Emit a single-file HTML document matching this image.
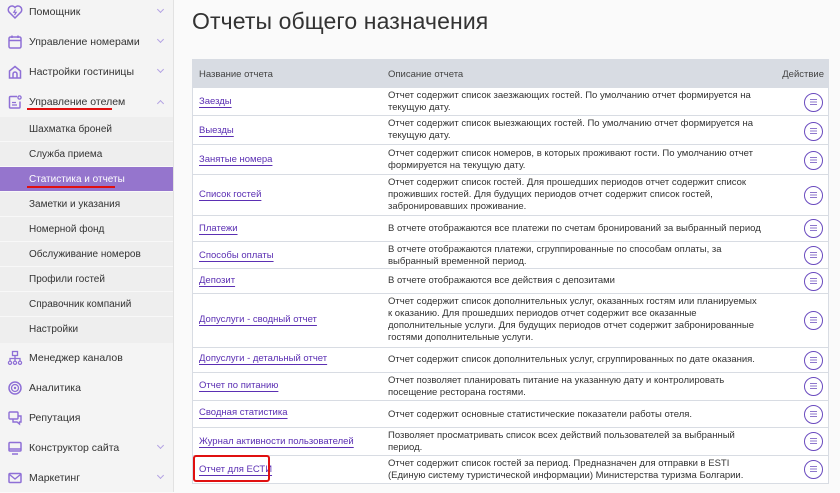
<!DOCTYPE html>
<html><head><meta charset="utf-8"><style>
*{margin:0;padding:0;box-sizing:border-box}
body{width:840px;height:492px;overflow:hidden;background:#fafafa;font-family:"Liberation Sans","DejaVu Sans",sans-serif;position:relative;color:#333}
.sb{position:absolute;left:0;top:0;width:174px;height:492px;background:#f4f4f4;border-right:1px solid #e2e2e2}
.it{position:absolute;left:0;width:173px;height:30px;font-size:10.5px;color:#333;line-height:30px;padding-left:29px}
.it svg{position:absolute;left:7px;top:7px}
.chev{position:absolute;left:158px;top:10px;width:5px;height:5px;border-right:1.2px solid #b3a2e3;border-bottom:1.2px solid #b3a2e3;transform:rotate(45deg)}
.chev.up{transform:rotate(-135deg);top:14px}
.sub{position:absolute;left:0;width:173px;height:25px;background:#eee;border-bottom:1px solid #f8f8f8;font-size:10px;line-height:25px;padding-left:29px;color:#333}
.sub.act{background:#9575cd;color:#fff}
.red{position:absolute;height:2px;background:#e01010}
h1{position:absolute;left:192px;top:8px;font-size:23px;font-weight:normal;color:#333;letter-spacing:0.1px}
.tbl{position:absolute;left:192px;top:59px;width:637px;border:1px solid #d8dce3;background:#fff}
.row{position:relative;border-top:1px solid #d8dce3;font-size:9.5px}
.hd{background:#d8dce3;height:27px;color:#444;font-size:9.5px;position:relative}
.n{position:absolute;left:6px;color:#5b2fb3;text-decoration:underline;text-decoration-color:#5b2fb3;text-underline-offset:3px}
.d{position:absolute;left:195px;width:370px;line-height:12px;color:#333}
.b{position:absolute;left:611px;width:19px;height:19px;border:1.4px solid #6a4bbf;border-radius:50%}
.b:before{content:"";position:absolute;left:5px;top:5px;width:7px;height:1.3px;background:#8e77cc;box-shadow:0 2.5px 0 #8e77cc,0 5px 0 #8e77cc}
</style></head><body>
<div class="sb">
<div class="it" style="top:-3px"><svg width="16" height="16" viewBox="0 0 16 16"><path d="M8 14 L2 8 A3.3 3.3 0 0 1 8 3.5 A3.3 3.3 0 0 1 14 8 Z" fill="none" stroke="#8e6fd6" stroke-width="1.5"/><path d="M8.5 5.5 L6.8 8.3 H9.2 L7.5 11" fill="none" stroke="#8e6fd6" stroke-width="1.2"/></svg>Помощник<span class="chev"></span></div>
<div class="it" style="top:27px"><svg width="16" height="16" viewBox="0 0 16 16"><rect x="2" y="3" width="12" height="11" rx="1.5" fill="none" stroke="#8e6fd6" stroke-width="1.5"/><path d="M2 6.5H14M5 1.5V4M11 1.5V4" stroke="#8e6fd6" stroke-width="1.5"/></svg>Управление номерами<span class="chev"></span></div>
<div class="it" style="top:57px"><svg width="16" height="16" viewBox="0 0 16 16"><path d="M2.5 14V7L8 2.5 13.5 7V14Z M6 14V10A2 2 0 0 1 10 10V14" fill="none" stroke="#8e6fd6" stroke-width="1.5"/></svg>Настройки гостиницы<span class="chev"></span></div>
<div class="it" style="top:87px"><svg width="16" height="16" viewBox="0 0 16 16"><path d="M10 2.5H3.5A1 1 0 0 0 2.5 3.5V13A1 1 0 0 0 3.5 14H12A1 1 0 0 0 13 13V7.5" fill="none" stroke="#8e6fd6" stroke-width="1.5"/><circle cx="12.5" cy="3.5" r="1.6" fill="none" stroke="#8e6fd6" stroke-width="1.3"/><path d="M5 8.5H9M5 11H10" stroke="#8e6fd6" stroke-width="1.3"/></svg>Управление отелем<span class="chev up"></span></div>
<div class="red" style="left:27px;top:108px;width:85px"></div>
<div class="sub" style="top:117px">Шахматка броней</div>
<div class="sub" style="top:142px">Служба приема</div>
<div class="sub act" style="top:167px">Статистика и отчеты</div>
<div class="red" style="left:27px;top:186px;width:88px"></div>
<div class="sub" style="top:192px">Заметки и указания</div>
<div class="sub" style="top:217px">Номерной фонд</div>
<div class="sub" style="top:242px">Обслуживание номеров</div>
<div class="sub" style="top:267px">Профили гостей</div>
<div class="sub" style="top:292px">Справочник компаний</div>
<div class="sub" style="top:317px;border:none;height:26px">Настройки</div>
<div class="it" style="top:343px"><svg width="16" height="16" viewBox="0 0 16 16"><rect x="5.5" y="1.5" width="5" height="4" fill="none" stroke="#8e6fd6" stroke-width="1.3"/><path d="M8 5.5V8.5M3 11V8.5H13V11M8 8.5V11" fill="none" stroke="#8e6fd6" stroke-width="1.3"/><circle cx="3" cy="12.8" r="1.6" fill="none" stroke="#8e6fd6" stroke-width="1.2"/><circle cx="8" cy="12.8" r="1.6" fill="none" stroke="#8e6fd6" stroke-width="1.2"/><circle cx="13" cy="12.8" r="1.6" fill="none" stroke="#8e6fd6" stroke-width="1.2"/></svg>Менеджер каналов</div>
<div class="it" style="top:373px"><svg width="16" height="16" viewBox="0 0 16 16"><circle cx="8" cy="8" r="6" fill="none" stroke="#8e6fd6" stroke-width="1.5"/><circle cx="8" cy="8" r="3.5" fill="none" stroke="#8e6fd6" stroke-width="1.3"/><circle cx="8" cy="8" r="1.2" fill="#8e6fd6"/></svg>Аналитика</div>
<div class="it" style="top:403px"><svg width="16" height="16" viewBox="0 0 16 16"><rect x="2" y="2" width="9" height="7" rx="1" fill="none" stroke="#8e6fd6" stroke-width="1.4"/><path d="M6 9.5V12H10L12.5 14V12H14V6H11" fill="none" stroke="#8e6fd6" stroke-width="1.4"/></svg>Репутация</div>
<div class="it" style="top:433px"><svg width="16" height="16" viewBox="0 0 16 16"><rect x="2" y="2.5" width="12" height="8.5" rx="1" fill="none" stroke="#8e6fd6" stroke-width="1.5"/><path d="M2 9H14M5 14H11" stroke="#8e6fd6" stroke-width="1.5"/></svg>Конструктор сайта<span class="chev"></span></div>
<div class="it" style="top:463px"><svg width="16" height="16" viewBox="0 0 16 16"><rect x="2" y="3.5" width="12" height="9" rx="1" fill="none" stroke="#8e6fd6" stroke-width="1.5"/><path d="M2.5 4.5L8 9 13.5 4.5" fill="none" stroke="#8e6fd6" stroke-width="1.4"/></svg>Маркетинг<span class="chev"></span></div>
</div>

<h1>Отчеты общего назначения</h1>

<div class="tbl">
<div class="hd"><span style="position:absolute;left:6px;top:9px">Название отчета</span><span style="position:absolute;left:195px;top:9px">Описание отчета</span><span style="position:absolute;right:4px;top:9px">Действие</span></div>
<div class="row" style="height:28px"><span class="n" style="top:8px">Заезды</span><span class="d" style="top:2px">Отчет содержит список заезжающих гостей. По умолчанию отчет формируется на текущую дату.</span><span class="b" style="top:5px"></span></div>
<div class="row" style="height:29px"><span class="n" style="top:9px">Выезды</span><span class="d" style="top:2px">Отчет содержит список выезжающих гостей. По умолчанию отчет формируется на текущую дату.</span><span class="b" style="top:6px"></span></div>
<div class="row" style="height:30px"><span class="n" style="top:9px">Занятые номера</span><span class="d" style="top:3px">Отчет содержит список номеров, в которых проживают гости. По умолчанию отчет формируется на текущую дату.</span><span class="b" style="top:6px"></span></div>
<div class="row" style="height:41px"><span class="n" style="top:14px">Список гостей</span><span class="d" style="top:2px">Отчет содержит список гостей. Для прошедших периодов отчет содержит список проживших гостей. Для будущих периодов отчет содержит список гостей, забронировавших проживание.</span><span class="b" style="top:11px"></span></div>
<div class="row" style="height:26px"><span class="n" style="top:7px">Платежи</span><span class="d" style="top:7px;width:420px">В отчете отображаются все платежи по счетам бронирований за выбранный период</span><span class="b" style="top:3px"></span></div>
<div class="row" style="height:27px"><span class="n" style="top:8px">Способы оплаты</span><span class="d" style="top:2px">В отчете отображаются платежи, сгруппированные по способам оплаты, за выбранный временной период.</span><span class="b" style="top:4px"></span></div>
<div class="row" style="height:25px"><span class="n" style="top:6px">Депозит</span><span class="d" style="top:6px">В отчете отображаются все действия с депозитами</span><span class="b" style="top:3px"></span></div>
<div class="row" style="height:54px"><span class="n" style="top:20px">Допуслуги - сводный отчет</span><span class="d" style="top:2px">Отчет содержит список дополнительных услуг, оказанных гостям или планируемых к оказанию. Для прошедших периодов отчет содержит все оказанные дополнительные услуги. Для будущих периодов отчет содержит забронированные гостями дополнительные услуги.</span><span class="b" style="top:17px"></span></div>
<div class="row" style="height:25px"><span class="n" style="top:5px">Допуслуги - детальный отчет</span><span class="d" style="top:6px;width:420px">Отчет содержит список дополнительных услуг, сгруппированных по дате оказания.</span><span class="b" style="top:3px"></span></div>
<div class="row" style="height:28px"><span class="n" style="top:7px">Отчет по питанию</span><span class="d" style="top:2px">Отчет позволяет планировать питание на указанную дату и контролировать посещение ресторана гостями.</span><span class="b" style="top:4px"></span></div>
<div class="row" style="height:27px"><span class="n" style="top:6px">Сводная статистика</span><span class="d" style="top:8px">Отчет содержит основные статистические показатели работы отеля.</span><span class="b" style="top:4px"></span></div>
<div class="row" style="height:28px"><span class="n" style="top:8px">Журнал активности пользователей</span><span class="d" style="top:2px">Позволяет просматривать список всех действий пользователей за выбранный период.</span><span class="b" style="top:4px"></span></div>
<div class="row" style="height:28px"><span class="n" style="top:8px">Отчет для ЕСТИ</span><span class="d" style="top:2px">Отчет содержит список гостей за период. Предназначен для отправки в ESTI (Единую систему туристической информации) Министерства туризма Болгарии.</span><span class="b" style="top:4px"></span></div>
</div>
<div style="position:absolute;left:193px;top:455px;width:77px;height:27px;border:2px solid #e01010;border-radius:3px"></div>
</body></html>
